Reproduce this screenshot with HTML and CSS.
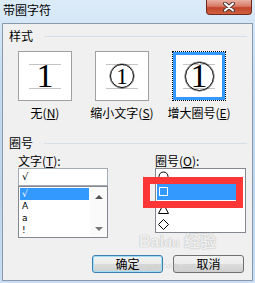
FILE: index.html
```html
<!DOCTYPE html>
<html lang="zh-CN">

<head>
    <meta charset="UTF-8">
    <title>带圈字符</title>
    <link rel="stylesheet" href="styles.css">
</head>

<body>
    <div class="window">
        <div class="titlebar">
            <span class="title">带圈字符</span>
            <div class="close">
                <svg width="12" height="10" viewBox="0 0 12 10">
                    <path d="M2 1.5 L10 8.5 M10 1.5 L2 8.5" stroke="#4a3a38" stroke-width="4" stroke-linecap="round" />
                    <path d="M2 1.5 L10 8.5 M10 1.5 L2 8.5" stroke="#fff" stroke-width="2" stroke-linecap="round" />
                </svg>
            </div>
        </div>

        <div class="client">
            <div class="group-head"><span>样式</span><i class="rule"></i></div>

            <div class="styles">
                <div class="option">
                    <div class="swatch">
                        <div class="guides"><span class="digit">1</span></div>
                    </div>
                    <div class="caption">无(<u>N</u>)</div>
                </div>
                <div class="option">
                    <div class="swatch">
                        <div class="guides"><span class="ring small"><span class="digit">1</span></span></div>
                    </div>
                    <div class="caption">缩小文字(<u>S</u>)</div>
                </div>
                <div class="option">
                    <div class="swatch selected">
                        <div class="guides"><span class="ring big"><span class="digit">1</span></span></div>
                    </div>
                    <div class="caption">增大圈号(<u>E</u>)</div>
                </div>
            </div>

            <div class="group-head second"><span>圈号</span><i class="rule"></i></div>

            <div class="pickers">
                <div class="picker text-picker">
                    <div class="caption">文字(<u>T</u>):</div>
                    <div class="field">√</div>
                    <div class="list">
                        <div class="rows">
                            <div class="row active">√</div>
                            <div class="row">A</div>
                            <div class="row">a</div>
                            <div class="row">!</div>
                        </div>
                        <div class="scroll">
                            <i class="arrow up"></i>
                            <i class="arrow down"></i>
                        </div>
                    </div>
                </div>

                <div class="picker ring-picker">
                    <div class="caption">圈号(<u>O</u>):</div>
                    <div class="list">
                        <div class="rows">
                            <div class="row">
                                <svg width="11" height="11"><circle cx="5.5" cy="5.5" r="4.5" fill="none" stroke="#000" /></svg>
                            </div>
                            <div class="row active">
                                <svg width="11" height="11"><rect x="1.5" y="1.5" width="8" height="8" fill="none" stroke="#fff" /></svg>
                            </div>
                            <div class="row">
                                <svg width="11" height="11"><polygon points="5.5,1 10.5,10.5 0.5,10.5" fill="none" stroke="#000" /></svg>
                            </div>
                            <div class="row">
                                <svg width="11" height="11"><polygon points="5.5,0.5 10.5,5.5 5.5,10.5 0.5,5.5" fill="none" stroke="#000" /></svg>
                            </div>
                        </div>
                    </div>
                </div>
            </div>

            <div class="actions">
                <button class="btn default">确定</button>
                <button class="btn">取消</button>
            </div>
        </div>

        <!-- watermark and red annotation sit over the dialog -->
        <div class="mark">
            <span class="mark-logo">Bai<b>du</b> 经验</span>
            <span class="mark-url">jingyan.baidu.com</span>
        </div>
        <div class="callout"></div>
    </div>
</body>

</html>
```

FILE: styles.css
```css
* {
    box-sizing: border-box;
}

body {
    margin: 0;
    font-family: "Noto Sans CJK SC", "Liberation Sans", sans-serif;
    font-size: 12px;
    color: #000;
}

u {
    text-decoration: underline;
}

.window {
    position: relative;
    width: 255px;
    height: 283px;
    overflow: hidden;
    background: linear-gradient(#dcebf8, #c3daf0 30%, #bed5ed 70%, #c9def3);
}

.titlebar {
    height: 23px;
    display: flex;
    justify-content: space-between;
    align-items: flex-start;
}

.title {
    padding: 3px 0 0 3px;
    line-height: 14px;
}

.close {
    width: 46px;
    height: 15px;
    margin-right: 3px;
    display: flex;
    justify-content: center;
    align-items: center;
    border: 1px solid #6f2a20;
    border-top: none;
    border-radius: 0 0 4px 4px;
    background: linear-gradient(#eab0a3, #d87a65 45%, #c3452c 55%, #d0603f);
}

.client {
    margin: 0 2px;
    height: 258px;
    padding-top: 5px;
    border: 1px solid #8a9aac;
    background-color: #f0f0f0;
    display: flex;
    flex-direction: column;
}

.group-head {
    display: flex;
    align-items: center;
    height: 14px;
    line-height: 14px;
    margin-left: 6px;
    margin-right: 5px;
    gap: 11px;
}

.group-head.second {
    margin-top: 16px;
}

.rule {
    flex: 1;
    height: 1px;
    margin-top: 1px;
    background-color: #d5dfe5;
}

.styles {
    display: flex;
    gap: 1px;
    margin-top: 8px;
    padding-left: 4px;
}

.option {
    width: 76px;
    display: flex;
    flex-direction: column;
    align-items: center;
}

.swatch {
    width: 54px;
    height: 50px;
    display: flex;
    justify-content: center;
    align-items: center;
    border: 1px solid #a0a0a0;
    background-color: #fff;
}

.swatch.selected {
    border: 1px dotted #000;
    box-shadow: inset 0 0 0 3px #3399ff;
}

.guides {
    width: 32px;
    height: 25px;
    display: flex;
    justify-content: center;
    align-items: center;
    border-top: 1px solid #c4c4c4;
    border-bottom: 1px solid #c4c4c4;
}

.digit {
    font-family: "Liberation Serif", serif;
    font-size: 34px;
    line-height: 1;
}

.ring {
    flex: none;
    display: flex;
    justify-content: center;
    align-items: center;
    border-radius: 50%;
    border: 1px solid #000;
    box-shadow: 0 0 0 0.5px rgba(0, 0, 0, 0.6);
}

.ring.small {
    width: 24px;
    height: 24px;
}

.ring.small .digit {
    font-size: 23px;
}

.ring.big {
    width: 29px;
    height: 29px;
}

.caption {
    margin-top: 5px;
    line-height: 14px;
    white-space: nowrap;
}

.pickers {
    display: flex;
    align-items: flex-start;
    gap: 47px;
    margin-top: 4px;
    padding-left: 15px;
}

.picker .caption {
    margin-top: 0;
}

.text-picker {
    width: 90px;
}

.ring-picker {
    width: 91px;
}

.field {
    height: 18px;
    padding-left: 3px;
    line-height: 16px;
    font-family: "DejaVu Sans", sans-serif;
    font-size: 10px;
    border: 1px solid #a5acb5;
    background-color: #fff;
}

.list {
    display: flex;
    border: 1px solid #828790;
    background-color: #fff;
}

.text-picker .list {
    height: 52px;
}

.ring-picker .list {
    height: 65px;
}

.rows {
    flex: 1;
    padding-top: 1px;
}

.text-picker .row {
    height: 12px;
    line-height: 12px;
    font-family: "DejaVu Sans", sans-serif;
    font-size: 9px;
    margin: 0 1px;
    padding-left: 2px;
}

.ring-picker .rows {
    padding-top: 0;
}

.ring-picker .row {
    height: 16px;
    display: flex;
    align-items: center;
    margin: 0 4px 0 1px;
    padding-left: 1px;
}

.ring-picker .row:first-child {
    height: 14px;
}

.ring-picker .row.active {
    height: 17px;
}

.row.active {
    background-color: #3399ff;
    color: #fff;
}

.scroll {
    width: 17px;
    display: flex;
    flex-direction: column;
    justify-content: space-between;
    align-items: center;
    padding: 8px 0 6px;
    background-color: #fafafa;
}

.arrow {
    width: 0;
    height: 0;
    border-left: 4px solid transparent;
    border-right: 4px solid transparent;
}

.arrow.up {
    border-bottom: 4px solid #555;
}

.arrow.down {
    border-top: 4px solid #777;
}

.actions {
    display: flex;
    justify-content: flex-end;
    gap: 10px;
    margin-top: 17px;
    padding-right: 8px;
}

.btn {
    width: 71px;
    height: 18px;
    padding: 0;
    font: inherit;
    line-height: 16px;
    color: #000;
    border: 1px solid #707070;
    border-radius: 3px;
    background: linear-gradient(#f2f2f2, #ebebeb 50%, #dddddd 50%, #cfcfcf);
}

.btn.default {
    border-color: #3c7fb1;
    box-shadow: inset 0 0 0 1px #9fdcf6;
}

.mark {
    position: absolute;
    left: 139px;
    top: 233px;
    display: flex;
    flex-direction: column;
    pointer-events: none;
    color: rgba(255, 255, 255, 0.8);
    text-shadow: 0 0 1px #b8b8b8, 0 0 1px #b8b8b8;
}

.mark-logo {
    font-family: "Liberation Sans", sans-serif;
    font-size: 16px;
    font-weight: bold;
    line-height: 18px;
}

.mark-logo b {
    font-size: 13px;
}

.mark-url {
    margin-top: 10px;
    margin-left: 0;
    font-family: "Liberation Sans", sans-serif;
    font-size: 7px;
    line-height: 8px;
    color: rgba(180, 180, 180, 0.35);
    text-shadow: none;
}

.callout {
    position: absolute;
    left: 143px;
    top: 177px;
    width: 100px;
    height: 31px;
    border: 7px solid #ff3636;
}
```
